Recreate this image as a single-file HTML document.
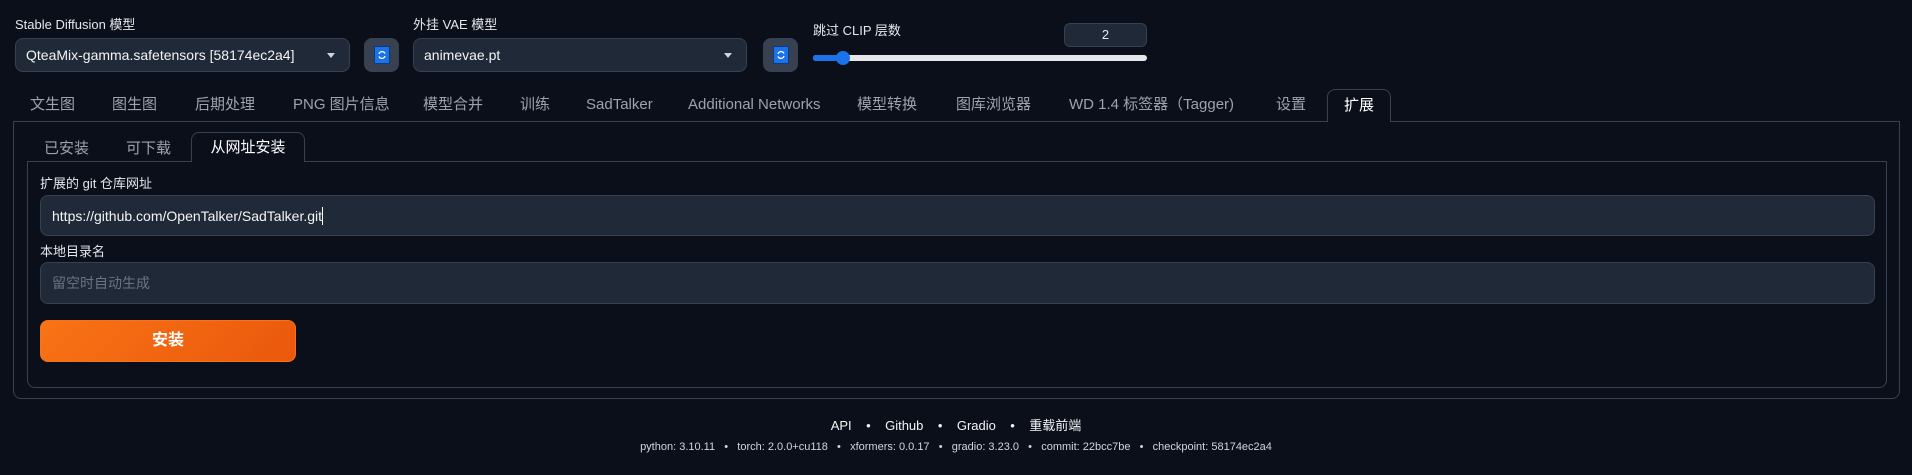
<!DOCTYPE html>
<html><head><meta charset="utf-8"><style>
*{box-sizing:border-box;margin:0;padding:0}
body{width:1912px;height:475px;background:#0b0f19;color:#e5e7eb;font-family:"Liberation Sans","Noto Sans CJK SC",sans-serif;position:relative;overflow:hidden}
.a{position:absolute;line-height:20px}
.lbl{font-size:13px;color:#e5e7eb;white-space:nowrap}
.dd{background:#1f2937;border:1px solid #374151;border-radius:8px;font-size:14px;color:#f3f4f6;padding:0 10px;display:flex;align-items:center}
.dd:after{content:"";position:absolute;right:14px;top:50%;margin-top:-2px;border:4px solid transparent;border-top:5px solid #d1d5db}
.rb{background:#374151;border-radius:8px;display:flex;align-items:center;justify-content:center}
.rb span{width:16px;height:18px;background:#1a73e8;border:1px solid #0d3b7a;display:flex;align-items:center;justify-content:center}
.tab{font-size:15px;color:#9ca3af;white-space:nowrap}
.inp{background:#1f2937;border:1px solid #374151;border-radius:8px;font-size:14px;padding:0 11px;display:flex;align-items:center}
</style></head><body>
<div class="a lbl" style="left:15px;top:15px">Stable Diffusion 模型</div>
<div class="a dd" style="left:15px;top:38px;width:335px;height:34px">QteaMix-gamma.safetensors [58174ec2a4]</div>
<div class="a rb" style="left:364px;top:38px;width:35px;height:34px"><span><svg width="10" height="10" viewBox="0 0 10 10"><path d="M8 3.5A3.2 3.2 0 0 0 2 4M2 6.5A3.2 3.2 0 0 0 8 6" stroke="#fff" stroke-width="1.3" fill="none"/></svg></span></div>
<div class="a lbl" style="left:413px;top:15px">外挂 VAE 模型</div>
<div class="a dd" style="left:413px;top:38px;width:334px;height:34px">animevae.pt</div>
<div class="a rb" style="left:763px;top:38px;width:35px;height:34px"><span><svg width="10" height="10" viewBox="0 0 10 10"><path d="M8 3.5A3.2 3.2 0 0 0 2 4M2 6.5A3.2 3.2 0 0 0 8 6" stroke="#fff" stroke-width="1.3" fill="none"/></svg></span></div>
<div class="a lbl" style="left:813px;top:21px">跳过 CLIP 层数</div>
<div class="a" style="left:1064px;top:23px;width:83px;height:24px;background:#1f2937;border:1px solid #374151;border-radius:6px;font-size:13px;text-align:center;line-height:22px">2</div>
<div class="a" style="left:813px;top:55px;width:334px;height:6px;background:#e5e7eb;border-radius:3px"></div>
<div class="a" style="left:813px;top:55px;width:30px;height:6px;background:#1a73e8;border-radius:3px"></div>
<div class="a" style="left:836px;top:51px;width:14px;height:14px;background:#1a73e8;border-radius:50%"></div>

<div class="a tab" style="left:30px;top:95px">文生图</div>
<div class="a tab" style="left:112px;top:95px">图生图</div>
<div class="a tab" style="left:195px;top:95px">后期处理</div>
<div class="a tab" style="left:293px;top:95px">PNG 图片信息</div>
<div class="a tab" style="left:423px;top:95px">模型合并</div>
<div class="a tab" style="left:520px;top:95px">训练</div>
<div class="a tab" style="left:586px;top:95px">SadTalker</div>
<div class="a tab" style="left:688px;top:95px">Additional Networks</div>
<div class="a tab" style="left:857px;top:95px">模型转换</div>
<div class="a tab" style="left:956px;top:95px">图库浏览器</div>
<div class="a tab" style="left:1069px;top:95px">WD 1.4 标签器（Tagger)</div>
<div class="a tab" style="left:1276px;top:95px">设置</div>

<div class="a" style="left:13px;top:121px;width:1887px;height:278px;border:1px solid #374151;border-radius:0 0 8px 8px"></div>
<div class="a" style="left:1327px;top:89px;width:64px;height:33px;border:1px solid #374151;border-bottom:none;border-radius:8px 8px 0 0;background:#0b0f19;color:#fff;font-size:15px;text-align:center;line-height:32px">扩展</div>

<div class="a tab" style="left:44px;top:139px">已安装</div>
<div class="a tab" style="left:126px;top:139px">可下载</div>
<div class="a" style="left:27px;top:161px;width:1860px;height:227px;border:1px solid #374151;border-radius:0 0 8px 8px"></div>
<div class="a" style="left:191px;top:132px;width:114px;height:30px;border:1px solid #374151;border-bottom:none;border-radius:8px 8px 0 0;background:#0b0f19;color:#fff;font-size:15px;text-align:center;line-height:30px">从网址安装</div>

<div class="a lbl" style="left:40px;top:174px">扩展的 git 仓库网址</div>
<div class="a inp" style="left:40px;top:195px;width:1835px;height:41px;color:#f3f4f6">https://github.com/OpenTalker/SadTalker.git<span style="display:inline-block;width:1px;height:18px;background:#fff"></span></div>
<div class="a lbl" style="left:40px;top:242px">本地目录名</div>
<div class="a inp" style="left:40px;top:262px;width:1835px;height:42px;color:#6b7280">留空时自动生成</div>
<div class="a" style="left:40px;top:320px;width:256px;height:42px;background:linear-gradient(135deg,#f97316,#ea580c);border:1px solid #f97316;border-radius:8px;color:#fff;font-size:16px;font-weight:bold;text-align:center;line-height:40px">安装</div>

<div class="a" style="left:0;top:416px;width:1912px;text-align:center;font-size:13px;color:#f3f4f6">API &nbsp;&nbsp;&nbsp;•&nbsp;&nbsp;&nbsp; Github &nbsp;&nbsp;&nbsp;•&nbsp;&nbsp;&nbsp; Gradio &nbsp;&nbsp;&nbsp;•&nbsp;&nbsp;&nbsp; 重载前端</div>
<div class="a" style="left:0;top:437px;width:1912px;text-align:center;font-size:11px;color:#d1d5db">python: 3.10.11 &nbsp;&nbsp;•&nbsp;&nbsp; torch: 2.0.0+cu118 &nbsp;&nbsp;•&nbsp;&nbsp; xformers: 0.0.17 &nbsp;&nbsp;•&nbsp;&nbsp; gradio: 3.23.0 &nbsp;&nbsp;•&nbsp;&nbsp; commit: 22bcc7be &nbsp;&nbsp;•&nbsp;&nbsp; checkpoint: 58174ec2a4</div>
</body></html>
